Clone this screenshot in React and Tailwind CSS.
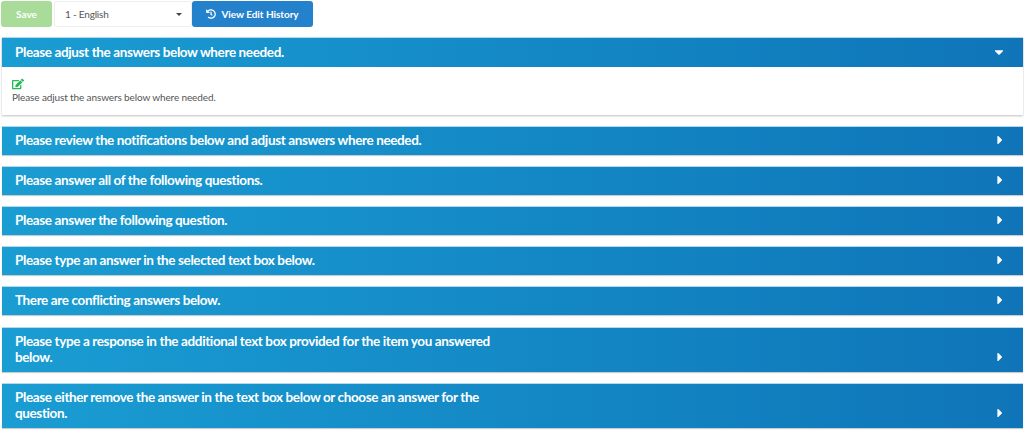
import React from "react";
import { FaCaretDown, FaCaretRight, FaEdit, FaHistory } from "react-icons/fa";

const items = [
  "Please review the notifications below and adjust answers where needed.",
  "Please answer all of the following questions.",
  "Please answer the following question.",
  "Please type an answer in the selected text box below.",
  "There are conflicting answers below.",
  "Please type a response in the additional text box provided for the item you answered below.",
  "Please either remove the answer in the text box below or choose an answer for the question.",
];

function Header({ text, open }) {
  return (
    <div
      className={
        "flex items-end justify-between pl-[13px] bg-gradient-to-r from-[#1a9dd3] to-[#0f75b8] border-t border-[#b5d9ec] shadow-[0_1px_1px_rgba(0,0,0,0.2)] " +
        (open ? "pt-[6px] pb-[7px] pr-[17px]" : "pt-[5px] pb-[7px] pr-[21px]")
      }
    >
      <div className="w-[500px] text-[13.5px] leading-[16px] tracking-[-0.38px] font-bold text-white">{text}</div>
      {open ? (
        <FaCaretDown className="text-white text-[14px] mb-px" />
      ) : (
        <FaCaretRight className="text-white text-[14px] mb-px -mr-[5px]" />
      )}
    </div>
  );
}

export default function App() {
  return (
    <div className="w-[1024px] h-[432px] overflow-hidden bg-white font-['Lato','Open_Sans',sans-serif] text-[#555]">
      <div className="flex h-[26px] pl-px mt-px">
        <button className="w-[51px] rounded-[3px] bg-[#a8dc98] text-white text-[10px] font-bold">Save</button>
        <div className="ml-[2px] w-[138px] flex items-center justify-between pl-[10px] pr-[9px] border border-[#eeeeee] rounded-[3px] text-[10px] tracking-[-0.2px]">
          <span>1 - English</span>
          <span className="border-x-[3px] border-t-[3px] border-x-transparent border-t-[#444]" />
        </div>
        <button className="w-[121px] flex items-center justify-center gap-[5px] rounded-[3px] bg-[#2481cc] text-white text-[10px] font-bold tracking-[-0.05px]">
          <FaHistory className="text-[10px]" />
          View Edit History
        </button>
      </div>
      <div className="ml-[2px] mr-px mt-[10px] flex flex-col">
        <div className="mb-[10.7px] shadow-[0_1px_2px_rgba(0,0,0,0.25)]">
          <Header text="Please adjust the answers below where needed." open />
          <div className="h-[48px] px-[10px] pt-[11px] bg-white text-[10px] leading-[13px] tracking-[-0.12px]">
            <FaEdit className="text-[#22bb55] text-[12px]" />
            <div className="mt-px">Please adjust the answers below where needed.</div>
          </div>
        </div>
        {items.map((t) => (
          <div key={t} className="mb-[11.2px]">
            <Header text={t} />
          </div>
        ))}
      </div>
    </div>
  );
}
